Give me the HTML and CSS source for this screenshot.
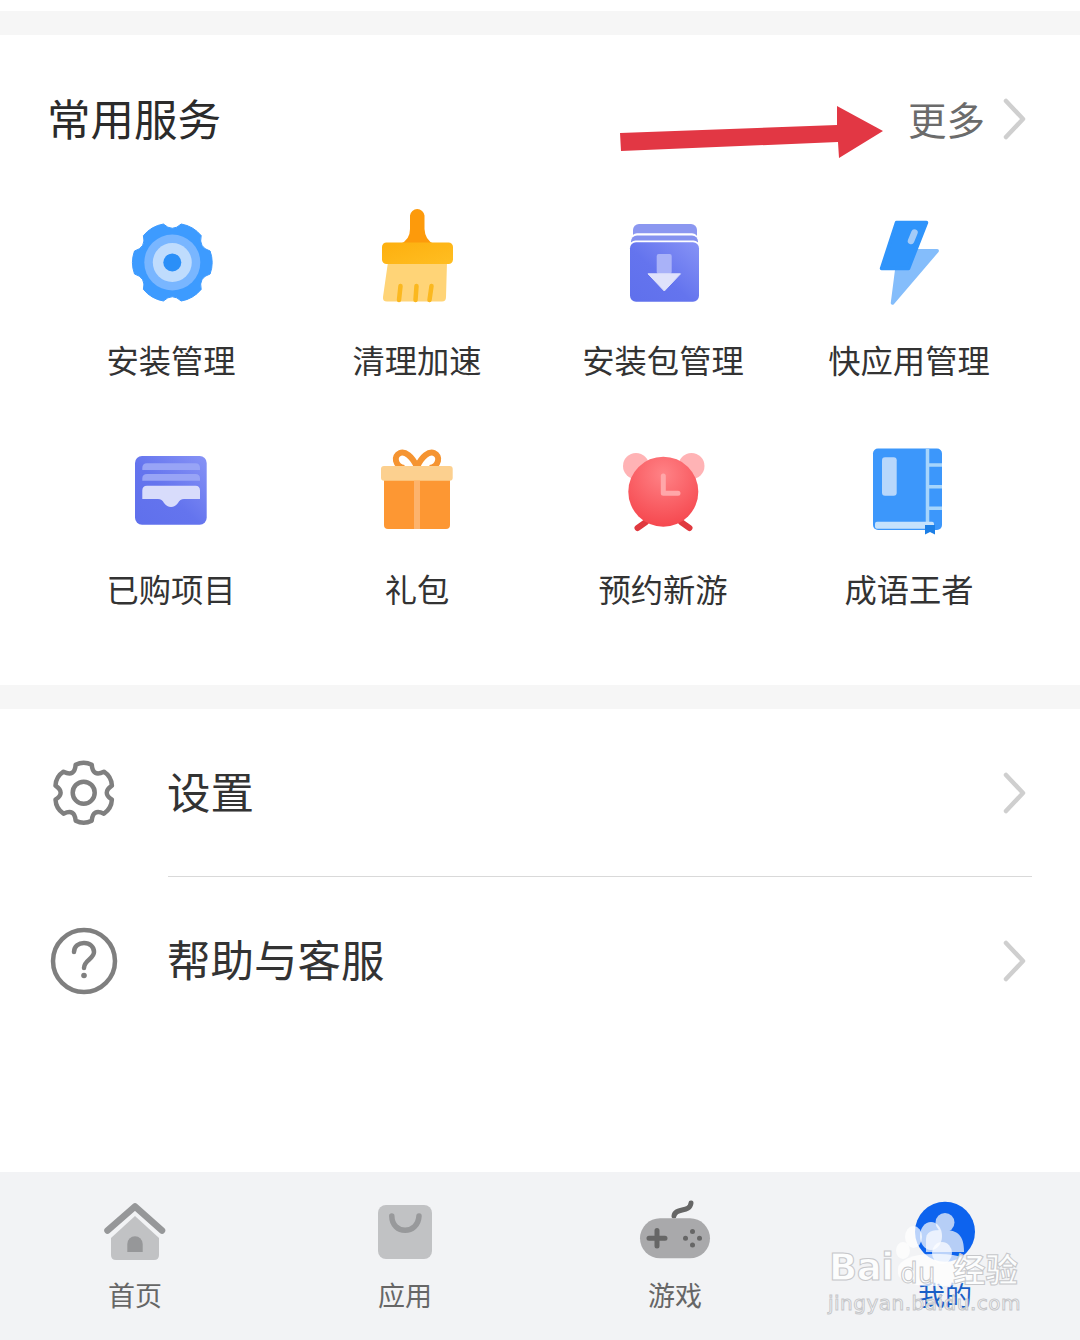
FILE: index.html
```html
<!DOCTYPE html>
<html lang="zh-CN">
<head>
<meta charset="utf-8">
<title>我的</title>
<link rel="stylesheet" href="styles.css">
</head>
<body>
<div class="page">
  <div class="divider-band first"></div>
  <section class="services">
    <header class="services-head">
      <h2 class="services-title">常用服务</h2>
      <div class="more">
        <span class="more-text">更多</span>
        <svg class="chevron" viewBox="0 0 28 44"><path d="M6 4 L23 22 L6 40"/></svg>
      </div>
    </header>
    <div class="grid">
      <div class="cell">
        <svg class="cell-icon" viewBox="111 202 120 120">
          <defs>
            <linearGradient id="wal" x1="1" y1="0" x2="0" y2="1"><stop offset="0" stop-color="#8793f6"/><stop offset=".55" stop-color="#6474ee"/><stop offset="1" stop-color="#5f70ec"/></linearGradient>
            <radialGradient id="clk" cx=".5" cy=".25" r=".8"><stop offset="0" stop-color="#ff8286"/><stop offset="1" stop-color="#f5444b"/></radialGradient>
            <linearGradient id="brh" x1="0" y1="0" x2="1" y2="1"><stop offset="0" stop-color="#fdaf0e"/><stop offset="1" stop-color="#ffbe22"/></linearGradient>
          </defs>
          <path transform="translate(172.3 262.5)" fill="#3d9bff" stroke="#3d9bff" stroke-linejoin="round" d="M37.800,-11.500 Q42,0 37.800,11.500 Q26,15 28.900,26.900 Q21,36.400 8.900,38.500 Q0,30 -8.900,38.500 Q-21,36.400 -28.900,26.900 Q-26,15 -37.800,11.500 Q-42,0 -37.800,-11.500 Q-26,-15 -28.900,-26.900 Q-21,-36.400 -8.900,-38.500 Q0,-30 8.900,-38.500 Q21,-36.400 28.900,-26.900 Q26,-15 37.800,-11.500 Z"/>
          <g transform="translate(172.3 262.5)">
            <circle r="28" fill="#79b6ff"/>
            <circle r="19.5" fill="#bfdcfd"/>
            <circle r="9" fill="#2a8ff8"/>
          </g>
        </svg>
        <span class="cell-label">安装管理</span>
      </div>
      <div class="cell">
        <svg class="cell-icon" viewBox="357 202 120 120">
          <path fill="#ffd477" d="M388 262 H447 L446 297 Q446 301.500 442 301.500 H387 Q382.500 301.500 383 297 Z"/>
          <path fill="none" stroke="#fbb81f" stroke-width="4.500" stroke-linecap="round" d="M400.500 286 L399 300 M416.500 286 L415.500 300 M431.500 286 L429.500 300"/>
          <path fill="#fd9a0b" d="M410 215.500 A7.300 7.300 0 0 1 424.500 215.500 L424.500 229 Q425 240 434 244 H400 Q410 240 410 229 Z"/>
          <rect x="382" y="242.500" width="71" height="21.500" rx="4.500" fill="url(#brh)"/>
        </svg>
        <span class="cell-label">清理加速</span>
      </div>
      <div class="cell">
        <svg class="cell-icon" viewBox="603 202 120 120">
          <rect x="633" y="224" width="64" height="30" rx="6" fill="#8b97f0"/>
          <rect x="631" y="233.300" width="67" height="30" rx="6" fill="#fff"/>
          <rect x="631" y="235.500" width="67" height="30" rx="6" fill="#8592ef"/>
          <rect x="629.500" y="240.500" width="70" height="30" rx="6" fill="#fff"/>
          <rect x="630" y="242.300" width="69" height="59.500" rx="6" fill="url(#wal)"/>
          <rect x="656.700" y="254" width="15" height="20" rx="2" fill="#a9b2f8"/>
          <path fill="#dfe2fb" stroke="#dfe2fb" stroke-linejoin="round" d="M648 273.800 H680.500 L664.300 291 Z"/>
        </svg>
        <span class="cell-label">安装包管理</span>
      </div>
      <div class="cell">
        <svg class="cell-icon" viewBox="849 202 120 120">
          <path fill="#84bdfb" stroke="#84bdfb" stroke-width="3.500" stroke-linejoin="round" d="M916 250.800 H937.200 L892.500 303 L897 268 Z"/>
          <path fill="#2f94fb" stroke="#2f94fb" stroke-width="3.500" stroke-linejoin="round" d="M896.500 222.500 H926.500 L908.500 268.500 H881.500 Z"/>
          <path fill="none" stroke="#a3cbf8" stroke-width="6.500" stroke-linecap="round" d="M914.500 232.500 L911 241"/>
        </svg>
        <span class="cell-label">快应用管理</span>
      </div>
      <div class="cell">
        <svg class="cell-icon" viewBox="111 431 120 120">
          <rect x="135" y="456" width="71.700" height="68.700" rx="7" fill="url(#wal)"/>
          <path fill="#98a4f6" d="M142.300 470 V468 Q142.300 463.300 147 463.300 H195.500 Q200 463.300 200 468 V470 Z M142.300 480.700 V478.500 Q142.300 474 147 474 H195.500 Q200 474 200 478.500 V480.700 Z"/>
          <path fill="#d8dcfb" d="M142.300 499 V490.500 Q142.300 485.700 147 485.700 H195.500 Q200 485.700 200 490.500 V499 H184 Q180 499 178 503 Q175 507 171 507 Q167 507 164 503 Q162 499 158 499 Z"/>
        </svg>
        <span class="cell-label">已购项目</span>
      </div>
      <div class="cell">
        <svg class="cell-icon" viewBox="357 431 120 120">
          <path fill="none" stroke="#f59431" stroke-width="6" d="M417 467 C412 456 405 451 400 453 C393 456 395 466 404 468 M417 467 C422 456 429 451 434 453 C441 456 439 466 430 468"/>
          <rect x="384" y="476" width="66" height="53" rx="4" fill="#fd9733"/>
          <rect x="381" y="466" width="71.700" height="14.700" rx="3" fill="#fcd08f"/>
          <rect x="414" y="480.700" width="6" height="48.300" fill="#fdb36c"/>
        </svg>
        <span class="cell-label">礼包</span>
      </div>
      <div class="cell">
        <svg class="cell-icon" viewBox="603 431 120 120">
          <circle cx="636" cy="466" r="13" fill="#ffb3b5"/>
          <circle cx="691.500" cy="466" r="13" fill="#ffb3b5"/>
          <path fill="none" stroke="#e0393f" stroke-width="6" stroke-linecap="round" d="M637.500 528 L646 522 M689.500 528 L681 522"/>
          <circle cx="663.300" cy="491.700" r="35" fill="url(#clk)"/>
          <path fill="none" stroke="#ffa7a9" stroke-width="5" stroke-linecap="round" stroke-linejoin="round" d="M663.300 476 V493.300 H678"/>
        </svg>
        <span class="cell-label">预约新游</span>
      </div>
      <div class="cell">
        <svg class="cell-icon" viewBox="849 431 120 120">
          <rect x="873" y="448.500" width="69" height="81.500" rx="5" fill="#3c97fb"/>
          <path fill="none" stroke="#a6d5fc" stroke-width="3.500" d="M927.500 449 V526 M929 465 H942 M929 486.700 H942 M929 508.300 H942"/>
          <rect x="875" y="521.700" width="59" height="7" rx="2" fill="#c6e2fc"/>
          <path fill="#1c7fe6" d="M925 525 H935 V534.500 L930 532 L925 534.500 Z"/>
          <rect x="882" y="457.300" width="14.700" height="38.400" rx="3" fill="#b8d7fb"/>
        </svg>
        <span class="cell-label">成语王者</span>
      </div>
    </div>
  </section>
  <div class="divider-band"></div>
  <section class="list">
    <div class="row">
      <svg class="row-icon" viewBox="0 0 72 72">
        <path transform="translate(35.7 35.7) rotate(90) scale(.746)" fill="none" stroke="#7f7f7f" stroke-width="6" stroke-linejoin="round" d="M37.500,-10.800 Q43,0 37.500,10.800 Q20.800,12 28.100,27.100 Q21.500,37.200 9.400,37.800 Q0,24 -9.400,37.800 Q-21.500,37.200 -28.100,27.100 Q-20.800,12 -37.500,10.800 Q-43,0 -37.500,-10.800 Q-20.800,-12 -28.100,-27.100 Q-21.500,-37.200 -9.400,-37.800 Q0,-24 9.400,-37.800 Q21.500,-37.200 28.100,-27.100 Q20.800,-12 37.500,-10.800 Z"/>
        <circle cx="35.700" cy="35.700" r="11" fill="none" stroke="#7f7f7f" stroke-width="4.500"/>
      </svg>
      <div class="row-body has-line">
        <span class="row-text">设置</span>
        <svg class="chevron" viewBox="0 0 28 44"><path d="M6 4 L23 22 L6 40"/></svg>
      </div>
    </div>
    <div class="row">
      <svg class="row-icon" viewBox="0 0 72 72">
        <circle cx="36" cy="36" r="31" fill="none" stroke="#7f7f7f" stroke-width="4.500"/>
        <path fill="none" stroke="#7f7f7f" stroke-width="4.500" stroke-linecap="round" d="M26 27 C26 21 31 18 36 18 C42 18 46 22 46 27 C46 34 36 35 36 43"/>
        <circle cx="36" cy="50.500" r="2.800" fill="#7f7f7f"/>
      </svg>
      <div class="row-body">
        <span class="row-text">帮助与客服</span>
        <svg class="chevron" viewBox="0 0 28 44"><path d="M6 4 L23 22 L6 40"/></svg>
      </div>
    </div>
  </section>
  <nav class="tabs">
    <div class="tab">
      <svg class="tab-icon" viewBox="95 1198 80 70">
        <path fill="#c1c2c4" d="M135 1216 L159 1238 V1255 Q159 1260 154 1260 H116 Q111 1260 111 1255 V1238 Z"/>
        <path fill="#969799" d="M127.300 1252 V1244 A7.700 7.700 0 0 1 142.700 1244 V1252 Z"/>
        <path fill="none" stroke="#969799" stroke-width="6.500" stroke-linecap="round" stroke-linejoin="round" d="M107.500 1230.500 L135 1206.500 L162 1230.500"/>
      </svg>
      <span class="tab-label">首页</span>
    </div>
    <div class="tab">
      <svg class="tab-icon" viewBox="365 1198 80 70">
        <rect x="378" y="1205" width="54" height="54" rx="8" fill="#c1c2c4"/>
        <path fill="none" stroke="#98999b" stroke-width="5.500" stroke-linecap="round" d="M391.800 1216 C392 1235 418 1235 419 1216"/>
      </svg>
      <span class="tab-label">应用</span>
    </div>
    <div class="tab">
      <svg class="tab-icon" viewBox="635 1198 80 70">
        <path fill="none" stroke="#666" stroke-width="5" stroke-linecap="round" d="M674 1216 C675 1207 690 1213 691 1203"/>
        <rect x="640" y="1218.300" width="70" height="40" rx="20" fill="#a9a9ab"/>
        <path fill="none" stroke="#666" stroke-width="5" stroke-linecap="round" d="M649 1238.300 H665 M657 1230.500 V1246"/>
        <g fill="#666">
          <circle cx="692.500" cy="1231.500" r="2.500"/>
          <circle cx="692.500" cy="1245" r="2.500"/>
          <circle cx="685.500" cy="1238.300" r="2.500"/>
          <circle cx="699.500" cy="1238.300" r="2.500"/>
        </g>
      </svg>
      <span class="tab-label">游戏</span>
    </div>
    <div class="tab active">
      <svg class="tab-icon" viewBox="905 1198 80 70">
        <defs><clipPath id="me"><circle cx="945" cy="1231.700" r="30"/></clipPath></defs>
        <circle cx="945" cy="1231.700" r="30" fill="#0d63ee"/>
        <g clip-path="url(#me)" fill="#b6cef6">
          <circle cx="945" cy="1222.500" r="9.500"/>
          <path d="M926 1240 C926 1230 934 1230 945 1230 C958 1230 964 1236 964 1252 H926 Z"/>
        </g>
      </svg>
      <span class="tab-label">我的</span>
    </div>
  </nav>
  <svg class="annotation" viewBox="0 0 300 70">
    <polygon fill="#e23744" points="0,27 217,19 217,0 263,25 219,52 218,36 1,45"/>
  </svg>
  <div class="watermark">
    <span class="paw toe-a"></span>
    <span class="paw toe-b"></span>
    <span class="paw toe-c"></span>
    <span class="paw toe-d"></span>
    <span class="paw pad"></span>
    <span class="wm wm-bai">Bai</span>
    <span class="wm wm-du">du</span>
    <span class="wm wm-jy">经验</span>
    <span class="wm wm-url">jingyan.baidu.com</span>
  </div>
</div>
</body>
</html>
```
FILE: styles.css
```css
* { box-sizing: border-box; }
html, body { margin: 0; padding: 0; background: #fff; }
body { font-family: "Noto Sans CJK SC", "Liberation Sans", sans-serif; }
.page {
  position: relative;
  width: 1080px;
  height: 1340px;
  overflow: hidden;
  display: flex;
  flex-direction: column;
  background: #fff;
}
.divider-band { height: 24px; background: #f6f6f6; flex: none; }
.divider-band.first { margin-top: 11px; }

.services { height: 650px; flex: none; padding: 55px 48px 0; }
.services-head {
  display: flex;
  align-items: center;
  justify-content: space-between;
  height: 60px;
  margin-bottom: 52px;
}
.services-title {
  margin: 0 0 4px -1px;
  font-size: 43.500px;
  font-weight: 400;
  line-height: 60px;
  color: #2b2b2b;
}
.more { display: flex; align-items: center; gap: 15px; margin-top: -2px; }
.more-text { font-size: 38.500px; line-height: 50px; color: #6b6b6b; margin-bottom: 2px; }
.chevron { width: 28px; height: 44px; flex: none; }
.chevron path { fill: none; stroke: #cfcfcf; stroke-width: 4.5px; stroke-linecap: round; stroke-linejoin: round; }
.more .chevron { margin-right: 4px; }

.grid {
  display: grid;
  grid-template-columns: repeat(4, 246px);
  row-gap: 48px;
}
.cell { display: flex; flex-direction: column; align-items: center; }
.cell-icon { width: 120px; height: 120px; flex: none; }
.cell-label {
  margin-top: 15px;
  margin-bottom: 2px;
  font-size: 32.300px;
  line-height: 44px;
  color: #333;
  white-space: nowrap;
}

.list { flex: 1; padding-left: 48px; }
.row { display: flex; height: 168px; }
.row-icon { width: 72px; height: 72px; flex: none; margin-top: 48px; }
.row-body {
  flex: 1;
  margin-left: 48px;
  margin-right: 48px;
  display: flex;
  align-items: center;
  justify-content: space-between;
  padding-right: 4px;
}
.row-body.has-line { border-bottom: 1px solid #d9d9d9; }
.row-text { font-size: 43.500px; line-height: 60px; color: #333; margin-left: -1px; margin-bottom: 4px; }

.tabs {
  flex: none;
  height: 168px;
  background: #f2f3f5;
  display: grid;
  grid-template-columns: repeat(4, 1fr);
  padding-top: 26px;
}
.tab { display: flex; flex-direction: column; align-items: center; }
.tab-icon { width: 80px; height: 70px; flex: none; }
.tab-label { margin-top: 7px; font-size: 27px; line-height: 40px; color: #666; }
.tab.active .tab-label { color: #1a5fc6; }

.annotation { position: absolute; left: 620px; top: 106px; width: 300px; height: 70px; }

.watermark { position: absolute; left: 820px; top: 1220px; width: 220px; height: 100px; }
.paw { position: absolute; border-radius: 50%; background: rgba(255, 255, 255, .72); }
.toe-a { left: 76px; top: 22px; width: 14px; height: 17px; }
.toe-b { left: 85px; top: 6px; width: 17px; height: 22px; }
.toe-c { left: 100px; top: 2px; width: 22px; height: 28px; }
.toe-d { left: 112px; top: 22px; width: 20px; height: 22px; }
.pad { left: 78px; top: 34px; width: 76px; height: 32px; border-radius: 45% 45% 40% 40%; }
.wm {
  position: absolute;
  font-family: "DejaVu Sans", sans-serif;
  color: rgba(255, 255, 255, .85);
  -webkit-text-stroke: 1px #c6c7ca;
  white-space: nowrap;
}
.wm-bai { left: 9px; top: 26px; font-size: 37px; line-height: 44px; font-weight: 700; letter-spacing: -.5px; }
.wm-du { left: 80px; top: 34px; font-size: 28px; line-height: 40px; font-weight: 400; }
.wm-jy { left: 133px; top: 28px; font-family: "Noto Sans CJK SC", sans-serif; font-size: 32.500px; line-height: 40px; font-weight: 700; }
.wm-url { left: 8px; top: 70px; font-size: 20px; line-height: 26px; letter-spacing: .5px; }
```
